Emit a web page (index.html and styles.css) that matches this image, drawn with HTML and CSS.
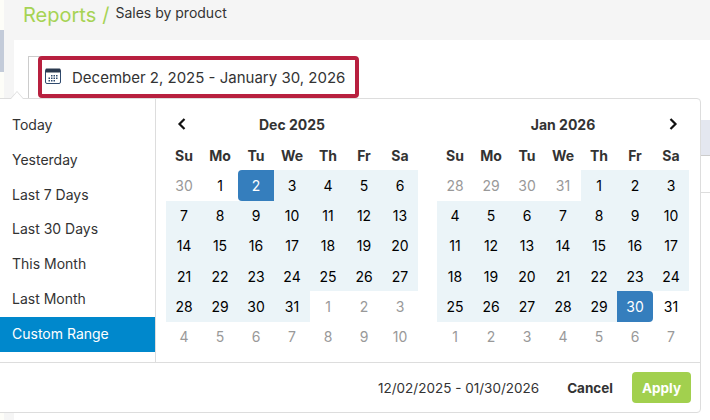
FILE: index.html
```html
<!DOCTYPE html>
<html lang="en">
<head>
<meta charset="utf-8">
<title>Sales by product</title>
<link rel="stylesheet" href="styles.css">
</head>
<body>
<div class="rail"><div class="thumb"></div></div>
<main class="main">
  <header class="crumbs">
    <a class="crumb-root">Reports</a><span class="crumb-sep">/</span><span class="crumb-page">Sales by product</span>
  </header>
  <section class="card">
    <div class="field">
      <div class="picker">
        <svg class="cal-icon" width="16" height="16" viewBox="0 0 16 16">
          <rect x="0.5" y="1.5" width="15" height="14" rx="1.5" fill="#fff" stroke="#2f4a6d"/>
          <rect x="0.5" y="0.5" width="15" height="4" rx="1" fill="#2b3a4f"/>
          <g fill="#2f4a6d">
            <rect x="6" y="7" width="1.5" height="1.5"/><rect x="8.5" y="7" width="1.5" height="1.5"/><rect x="11" y="7" width="1.5" height="1.5"/>
            <rect x="3.5" y="9.5" width="1.5" height="1.5"/><rect x="6" y="9.5" width="1.5" height="1.5"/><rect x="8.5" y="9.5" width="1.5" height="1.5"/><rect x="11" y="9.5" width="1.5" height="1.5"/>
            <rect x="3.5" y="12" width="1.5" height="1.5"/><rect x="6" y="12" width="1.5" height="1.5"/><rect x="8.5" y="12" width="1.5" height="1.5"/>
          </g>
        </svg>
        <span class="picker-text">December 2, 2025 - January 30, 2026</span>
      </div>
    </div>
    <div class="table-head"></div>
    <div class="table-row"></div>
  </section>
</main>

<div class="popup">
  <span class="arrow"></span>
  <div class="popup-body">
    <ul class="ranges">
      <li>Today</li>
      <li>Yesterday</li>
      <li>Last 7 Days</li>
      <li>Last 30 Days</li>
      <li>This Month</li>
      <li>Last Month</li>
      <li class="active">Custom Range</li>
    </ul>
    <div class="calendars">
      <div class="cal cal-left">
        <div class="cal-title">
          <svg class="chev" width="12" height="14" viewBox="0 0 12 14"><path d="M8.5 2 3.5 7l5 5" fill="none" stroke="#111" stroke-width="2.2"/></svg>
          <span>Dec 2025</span>
          <i class="chev-space"></i>
        </div>
        <div class="grid">
          <b>Su</b><b>Mo</b><b>Tu</b><b>We</b><b>Th</b><b>Fr</b><b>Sa</b>
          <span class="off">30</span><span>1</span><span class="start">2</span><span class="in">3</span><span class="in">4</span><span class="in">5</span><span class="in">6</span>
          <span class="in">7</span><span class="in">8</span><span class="in">9</span><span class="in">10</span><span class="in">11</span><span class="in">12</span><span class="in">13</span>
          <span class="in">14</span><span class="in">15</span><span class="in">16</span><span class="in">17</span><span class="in">18</span><span class="in">19</span><span class="in">20</span>
          <span class="in">21</span><span class="in">22</span><span class="in">23</span><span class="in">24</span><span class="in">25</span><span class="in">26</span><span class="in">27</span>
          <span class="in">28</span><span class="in">29</span><span class="in">30</span><span class="in">31</span><span class="off">1</span><span class="off">2</span><span class="off">3</span>
          <span class="off">4</span><span class="off">5</span><span class="off">6</span><span class="off">7</span><span class="off">8</span><span class="off">9</span><span class="off">10</span>
        </div>
      </div>
      <div class="cal cal-right">
        <div class="cal-title">
          <i class="chev-space"></i>
          <span>Jan 2026</span>
          <svg class="chev" width="12" height="14" viewBox="0 0 12 14"><path d="M3.5 2 8.5 7l-5 5" fill="none" stroke="#111" stroke-width="2.2"/></svg>
        </div>
        <div class="grid">
          <b>Su</b><b>Mo</b><b>Tu</b><b>We</b><b>Th</b><b>Fr</b><b>Sa</b>
          <span class="off">28</span><span class="off">29</span><span class="off">30</span><span class="off">31</span><span class="in">1</span><span class="in">2</span><span class="in">3</span>
          <span class="in">4</span><span class="in">5</span><span class="in">6</span><span class="in">7</span><span class="in">8</span><span class="in">9</span><span class="in">10</span>
          <span class="in">11</span><span class="in">12</span><span class="in">13</span><span class="in">14</span><span class="in">15</span><span class="in">16</span><span class="in">17</span>
          <span class="in">18</span><span class="in">19</span><span class="in">20</span><span class="in">21</span><span class="in">22</span><span class="in">23</span><span class="in">24</span>
          <span class="in">25</span><span class="in">26</span><span class="in">27</span><span class="in">28</span><span class="in">29</span><span class="end">30</span><span>31</span>
          <span class="off">1</span><span class="off">2</span><span class="off">3</span><span class="off">4</span><span class="off">5</span><span class="off">6</span><span class="off">7</span>
        </div>
      </div>
    </div>
  </div>
  <footer class="popup-foot">
    <span class="selected">12/02/2025 - 01/30/2026</span>
    <button class="btn-cancel">Cancel</button>
    <button class="btn-apply">Apply</button>
  </footer>
</div>
</body>
</html>
```
FILE: styles.css
```css
* { box-sizing: border-box; }
html, body { margin: 0; padding: 0; }
body {
  width: 710px;
  height: 420px;
  overflow: hidden;
  position: relative;
  display: flex;
  background: #fff;
  font-family: Inter, "Liberation Sans", sans-serif;
  color: #333;
}
.rail { width: 4px; flex: none; background: #fdfdf8; padding-top: 30px; }
.thumb { height: 42px; background: #c3cbd9; }
.main { flex: 1; background: #f5f5f5; display: flex; flex-direction: column; }
.crumbs { height: 40px; padding-left: 19px; display: flex; align-items: flex-start; }
.crumb-root { color: #a6d354; font-size: 20px; line-height: 28px; margin-top: 1px; }
.crumb-sep { color: #a6d354; font-size: 20px; line-height: 28px; margin: 1px 6px 0 6px; }
.crumb-page { color: #333; font-size: 14px; line-height: 26px; }
.card { flex: 1; margin-left: 10px; background: #fff; padding: 16px 0 0 14px; }
.field { border: solid #ccc; border-width: 1px 0 0 1px; height: 42px; width: 300px; padding-left: 9px; margin-top: 0; }
.picker {
  width: 321px;
  height: 42px;
  margin-top: -1px;
  border: 4px solid #b8203f;
  border-radius: 4px;
  background: #fff;
  display: flex;
  align-items: center;
  padding-left: 3px;
}
.cal-icon { flex: none; margin-right: 11px; margin-top: -3px; }
.picker-text { font-size: 15px; white-space: nowrap; }
.table-head { height: 36px; margin: 22px 0 0 -14px; background: #e4e7f0; border-bottom: 1px solid #ccc; }
.table-row { height: 37px; border-bottom: 1px solid #ddd; margin-left: -14px; }

.popup {
  position: absolute;
  left: -6px;
  top: 98px;
  width: 707px;
  height: 315px;
  background: #fff;
  border: 1px solid #ddd;
  border-radius: 4px;
}
.arrow {
  position: absolute;
  left: 15px;
  top: -8px;
  width: 0;
  height: 0;
  border: solid transparent;
  border-width: 0 7px 8px;
  border-bottom-color: #ddd;
}
.arrow::after {
  content: "";
  position: absolute;
  left: -6px;
  top: 1px;
  border: solid transparent;
  border-width: 0 6px 7px;
  border-bottom-color: #fff;
}
.popup-body { display: flex; height: 263px; }
.ranges {
  list-style: none;
  margin: 0;
  padding: 9px 0 0;
  width: 156px;
  height: 263px;
  flex: none;
  margin-left: 5px;
  border-right: 1px solid #ddd;
  font-size: 14px;
}
.ranges li { height: 34.8px; line-height: 34.8px; padding-left: 12px; }
.ranges .active { background: #0088cc; color: #fff; }
.calendars { display: flex; gap: 19px; padding: 10px 0 0 10px; }
.cal { width: 252px; }
.cal-title {
  height: 30px;
  display: flex;
  align-items: center;
  justify-content: space-between;
  padding: 0 10px;
  font-size: 14px;
  font-weight: 700;
}
.chev, .chev-space { width: 12px; flex: none; }
.grid { display: grid; grid-template-columns: repeat(7, 36px); grid-auto-rows: 30.25px; font-size: 14px; margin-top: 1px; }
.grid b, .grid span { display: flex; align-items: center; justify-content: center; color: #000; }
.grid b { color: #333; font-weight: 700; }
.grid .off { color: #999; }
.grid .in { background: #ebf4f8; }
.grid .start { background: #357ebd; color: #fff; border-radius: 4px 0 0 4px; }
.grid .end { background: #357ebd; color: #fff; border-radius: 0 4px 4px 0; }

.popup-foot {
  height: 50px;
  border-top: 1px solid #ddd;
  display: flex;
  align-items: center;
  justify-content: flex-end;
  padding-right: 9px;
  font-size: 13.5px;
}
.selected { margin-right: 28px; }
.btn-cancel { border: 0; background: none; font: 700 13.5px Inter, "Liberation Sans", sans-serif; color: #333; padding: 0; margin-right: 19px; }
.btn-apply { border: 0; width: 59px; height: 31px; border-radius: 4px; background: #a2d04e; color: #fff; font: 700 13.5px Inter, "Liberation Sans", sans-serif; padding: 0; }
```
